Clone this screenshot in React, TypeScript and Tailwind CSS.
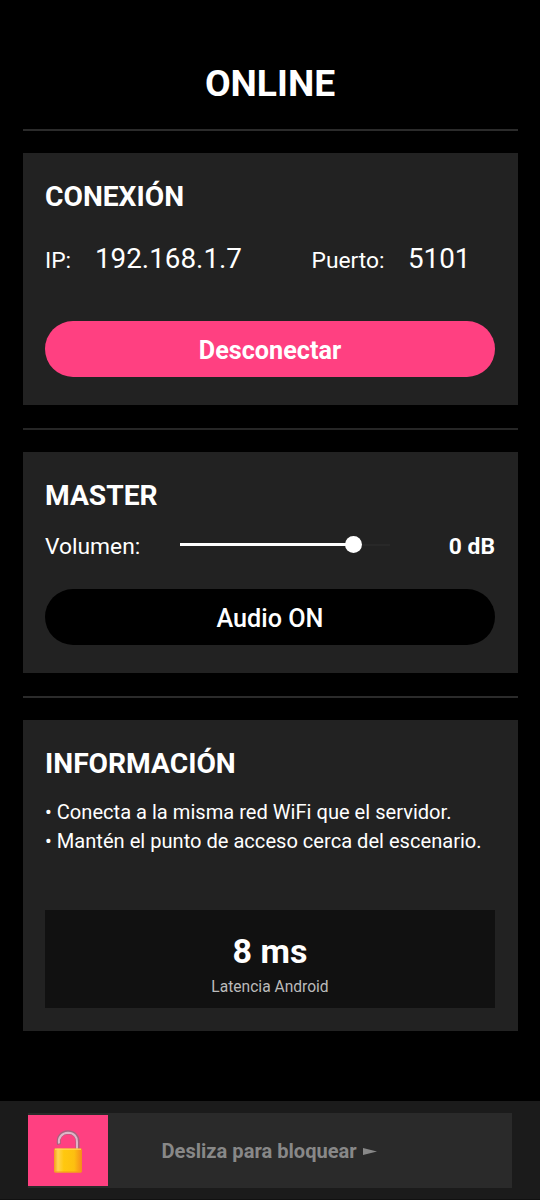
import type { ReactNode } from "react";

function Divider({ className }: { className: string }) {
  return <div className={`w-full shrink-0 ${className}`} />;
}

function Panel({ title, className, children }: { title: string; className: string; children: ReactNode }) {
  return (
    <section className={`flex shrink-0 flex-col bg-[#222222] px-[22.5px] pt-[26.5px] ${className}`}>
      <h2 className="h-[34px] shrink-0 text-[28.2px] leading-[34px] font-bold">{title}</h2>
      {children}
    </section>
  );
}

function OpenLock() {
  return (
    <svg className="h-[44px] w-[30px]" viewBox="0 0 30 44" aria-hidden="true">
      <defs>
        <linearGradient id="body" x1="0" x2="1">
          <stop offset="0" stopColor="#f49b1c" />
          <stop offset="0.14" stopColor="#ffd351" />
          <stop offset="0.35" stopColor="#ffc80e" />
          <stop offset="0.72" stopColor="#fdc010" />
          <stop offset="1" stopColor="#f58a1b" />
        </linearGradient>
      </defs>
      <path d="M6 15.5C4.5 8 8.5 3.6 15 3.3C21.5 3.3 25 8 24.5 13V20" fill="none" stroke="#a8647f" strokeWidth="4" />
      <path d="M6 14.5C5 8.5 9 4.1 15 3.8C21 3.8 24.3 8 24 13V20" fill="none" stroke="#dfb5c8" strokeWidth="2" />
      <rect x="1" y="19.5" width="28" height="24" rx="1" fill="url(#body)" />
      <path d="M2 20.2H28" stroke="#ffdc62" strokeWidth="1" />
      <path d="M2 43H28" stroke="#f39a1b" strokeWidth="1" />
    </svg>
  );
}

export default function App() {
  return (
    <div className="flex h-[1200px] w-[540px] flex-col overflow-hidden bg-black font-['Roboto',sans-serif] text-white">
      <main className="flex flex-1 flex-col px-[22.5px]">
        <header className="flex h-[129px] shrink-0 items-end justify-center pb-[24px]">
          <h1 className="text-[37.25px] leading-[44px] font-bold">ONLINE</h1>
        </header>
        <Divider className="h-[2px] bg-[#2b2b2b]" />

        <Panel title="CONEXIÓN" className="mt-[22px] h-[252px]">
          <div className="mt-[27px] flex h-[36px] items-baseline leading-[36px]">
            <span className="w-[50px] text-[22.8px]">IP:</span>
            <span className="w-[216.5px] text-[27.8px]">192.168.1.7</span>
            <span className="w-[96.5px] text-[22.8px]">Puerto:</span>
            <span className="text-[27.8px]">5101</span>
          </div>
          <button className="mt-[44.5px] h-[56px] w-full rounded-full bg-[#ff4081] pt-[3px] text-[25.2px] leading-[53px] font-bold">
            Desconectar
          </button>
        </Panel>
        <Divider className="mt-[23px] h-[2px] bg-[#262626]" />

        <Panel title="MASTER" className="mt-[22px] h-[221px]">
          <div className="mt-[18px] flex h-[32px] items-center">
            <span className="w-[135px] text-[22.8px] leading-[32px]">Volumen:</span>
            <div className="relative -top-[2px] flex h-[18px] w-[210px] items-center">
              <div className="h-[3px] w-[173px] bg-white" />
              <div className="h-[2px] w-[37px] bg-[#282828]" />
              <div className="absolute left-[164.5px] size-[17.5px] rounded-full bg-white" />
            </div>
            <span className="ml-auto text-[22.8px] leading-[32px] font-bold">0 dB</span>
          </div>
          <button className="mt-[26.5px] h-[56px] w-full rounded-full bg-black pt-[3px] text-[25.2px] leading-[53px] font-medium">
            Audio ON
          </button>
        </Panel>
        <Divider className="mt-[23px] h-[2px] bg-[#2b2b2b]" />

        <Panel title="INFORMACIÓN" className="mt-[22px] h-[310.5px]">
          <div className="mt-[17.5px] text-[20.1px] leading-[29px]">
            <p>• Conecta a la misma red WiFi que el servidor.</p>
            <p>• Mantén el punto de acceso cerca del escenario.</p>
          </div>
          <div className="mt-[54px] flex h-[98px] flex-col items-center bg-[#111111] pt-[21px]">
            <p className="text-[34px] leading-[40px] font-bold">8 ms</p>
            <p className="mt-[6px] text-[15.6px] leading-[20px] text-[#bbbbbb]">Latencia Android</p>
          </div>
        </Panel>
      </main>

      <footer className="h-[99px] shrink-0 border-b border-[#111111] bg-[#1b1b1b] pt-[12px] pr-[28.5px] pl-[28px]">
        <div className="flex h-[75px] items-center bg-[#2a2a2a]">
          <button className="flex h-[71px] w-[79.5px] items-center justify-center bg-[#ff4081]">
            <OpenLock />
          </button>
          <div className="ml-[54px] flex items-center gap-[6px] pt-[1.5px] text-[#888888]">
            <p className="text-[20.1px] leading-[24px] font-bold whitespace-nowrap">Desliza para bloquear</p>
            <svg className="h-[7px] w-[14px]" viewBox="0 0 14 7" aria-hidden="true">
              <path d="M0 0L14 3.5L0 7Z" fill="currentColor" />
            </svg>
          </div>
        </div>
      </footer>
    </div>
  );
}
